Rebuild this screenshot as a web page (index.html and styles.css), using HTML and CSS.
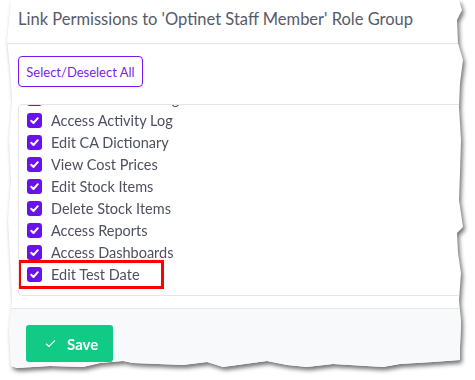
FILE: index.html
```html
<!DOCTYPE html>
<html lang="en">
<head>
    <meta charset="UTF-8">
    <meta name="viewport" content="width=device-width, initial-scale=1.0">
    <title>Link Permissions</title>
    <link rel="stylesheet" href="styles.css">
</head>
<body>
    <div class="sheet">
        <div class="card">
            <div class="card-header">
                <h2 class="title">Link Permissions to 'Optinet Staff Member' Role Group</h2>
            </div>

            <div class="card-body">
                <button class="btn-outline">Select/Deselect All</button>

                <div class="perm-box">
                    <ul class="perm-list">
                        <li><span class="check"><svg viewBox="0 0 15 15"><path d="M4.2 7.8 L6.5 10 L10.8 5.2"/></svg></span>Delete Archived Log</li>
                        <li><span class="check"><svg viewBox="0 0 15 15"><path d="M4.2 7.8 L6.5 10 L10.8 5.2"/></svg></span>Access Activity Log</li>
                        <li><span class="check"><svg viewBox="0 0 15 15"><path d="M4.2 7.8 L6.5 10 L10.8 5.2"/></svg></span>Edit CA Dictionary</li>
                        <li><span class="check"><svg viewBox="0 0 15 15"><path d="M4.2 7.8 L6.5 10 L10.8 5.2"/></svg></span>View Cost Prices</li>
                        <li><span class="check"><svg viewBox="0 0 15 15"><path d="M4.2 7.8 L6.5 10 L10.8 5.2"/></svg></span>Edit Stock Items</li>
                        <li><span class="check"><svg viewBox="0 0 15 15"><path d="M4.2 7.8 L6.5 10 L10.8 5.2"/></svg></span>Delete Stock Items</li>
                        <li><span class="check"><svg viewBox="0 0 15 15"><path d="M4.2 7.8 L6.5 10 L10.8 5.2"/></svg></span>Access Reports</li>
                        <li><span class="check"><svg viewBox="0 0 15 15"><path d="M4.2 7.8 L6.5 10 L10.8 5.2"/></svg></span>Access Dashboards</li>
                        <li><span class="check"><svg viewBox="0 0 15 15"><path d="M4.2 7.8 L6.5 10 L10.8 5.2"/></svg></span>Edit Test Date</li>
                    </ul>
                    <!-- annotation box from the screenshot -->
                    <div class="highlight"></div>
                </div>
            </div>

            <div class="card-footer">
                <button class="btn-save">
                    <svg viewBox="0 0 12 10"><path d="M1 5.2 L4.3 8.3 L11 1.5"/></svg>
                    Save
                </button>
            </div>
        </div>
    </div>
</body>
</html>
```

FILE: styles.css
```css
* {
    box-sizing: border-box;
}

body {
    margin: 0;
    background-color: #ffffff;
    font-family: "Lato", "Open Sans", sans-serif;
    overflow: hidden;
}

.sheet {
    width: 475px;
    height: 380px;
    filter: drop-shadow(2px 3px 2px rgba(0, 0, 0, 0.55));
}

.card {
    width: 475px;
    height: 375px;
    background-color: #ffffff;
    clip-path: polygon(
        11px 0, 459px 0, 462px 10px, 457px 20px, 458px 43px, 463px 60px,
        460px 83px, 459px 107px, 461px 140px, 460px 173px, 459px 200px,
        463px 227px, 457px 233px, 458px 253px, 461px 273px, 459px 300px,
        461px 323px, 460px 347px, 460px 360px, 433px 362px, 400px 364px,
        383px 367px, 333px 364px, 307px 367px, 287px 365px, 267px 361px,
        223px 367px, 207px 362px, 183px 365px, 133px 363px, 123px 361px,
        100px 363px, 83px 367px, 50px 366px, 17px 368px, 11px 366px,
        9px 330px, 12px 300px, 10px 260px, 8px 220px, 11px 180px,
        9px 140px, 12px 100px, 10px 70px, 7px 40px, 9px 20px
    );
}

.card-header {
    height: 44px;
    padding: 8px 18px 0;
    border-bottom: 1px solid #e4e6ea;
}

.title {
    margin: 0;
    font-size: 16.5px;
    font-weight: 400;
    line-height: 22px;
    color: #575b69;
    white-space: nowrap;
}

.card-body {
    padding: 12px 0 12px 18px;
}

.btn-outline {
    display: block;
    height: 31px;
    width: 125px;
    padding: 0;
    font-family: inherit;
    font-size: 13px;
    color: #7a1ef0;
    background-color: #ffffff;
    border: 1px solid #7a16f0;
    border-radius: 4px;
}

.perm-box {
    position: relative;
    margin-top: 17px;
    height: 192px;
    width: 460px;
    border: 1px solid #e4e6ea;
    border-radius: 4px;
    overflow: hidden;
}

.perm-list {
    list-style: none;
    margin: -18px 0 0;
    padding: 0 0 0 8px;
}

.perm-list li {
    display: flex;
    align-items: flex-start;
    height: 22px;
    padding-top: 1px;
    font-size: 14.5px;
    line-height: 22px;
    color: #4d5160;
}

.check {
    flex: none;
    width: 15px;
    height: 15px;
    margin: 3px 9px 0 0;
    background-color: #6a12ee;
    border-radius: 3px;
}

.check svg {
    display: block;
    width: 15px;
    height: 15px;
}

.check path {
    fill: none;
    stroke: #ffffff;
    stroke-width: 2;
    stroke-linecap: round;
    stroke-linejoin: round;
}

.highlight {
    position: absolute;
    top: 155px;
    left: -1px;
    width: 146px;
    height: 29px;
    border: 3px solid #ff0000;
}

.card-footer {
    height: 80px;
    padding: 16px 26px;
    background-color: #f8f9fb;
    border-top: 1px solid #e4e6ea;
}

.btn-save {
    display: flex;
    align-items: center;
    height: 37px;
    width: 87px;
    padding: 0 0 0 19px;
    font-family: inherit;
    font-size: 15px;
    font-weight: 700;
    color: #ffffff;
    background-color: #10ca86;
    border: none;
    border-radius: 3px;
}

.btn-save svg {
    width: 11px;
    height: 9px;
    margin-right: 11px;
}

.btn-save path {
    fill: none;
    stroke: #ffffff;
    stroke-width: 1.4;
}
```
